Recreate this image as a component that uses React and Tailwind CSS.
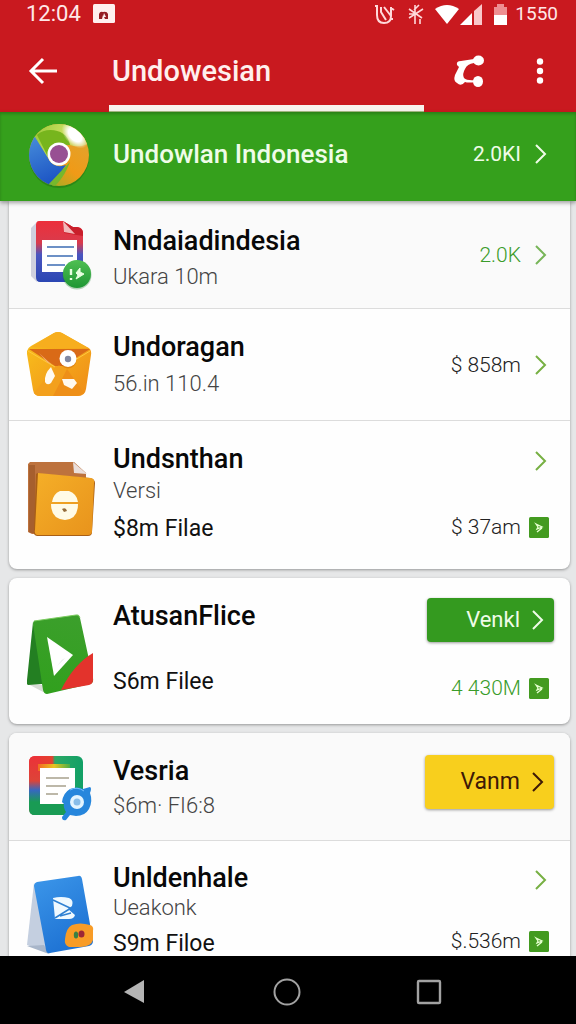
import React from "react";

function ChromeBall() {
  return (
    <svg viewBox="0 0 66 70" className="h-[70px] w-[66px] shrink-0" aria-hidden="true">
      <defs>
        <linearGradient id="ballBlue" x1="0" y1="0" x2="0.3" y2="1">
          <stop offset="0" stopColor="#4b93dd" />
          <stop offset="1" stopColor="#1d55c4" />
        </linearGradient>
        <linearGradient id="ballOrange" x1="1" y1="0" x2="0.2" y2="1">
          <stop offset="0" stopColor="#d9a83a" />
          <stop offset="0.6" stopColor="#f09a17" />
          <stop offset="1" stopColor="#84b52a" />
        </linearGradient>
        <linearGradient id="ballTop" x1="0" y1="0" x2="1" y2="0.2">
          <stop offset="0" stopColor="#8cc52f" />
          <stop offset="0.55" stopColor="#c5dc5c" />
          <stop offset="1" stopColor="#d6c65a" />
        </linearGradient>
        <radialGradient id="ballShine" cx="0.5" cy="0.5" r="0.5">
          <stop offset="0.5" stopColor="#fff" />
          <stop offset="1" stopColor="#fff" stopOpacity="0" />
        </radialGradient>
        <clipPath id="ballClip"><ellipse cx="31" cy="34" rx="30" ry="31" /></clipPath>
      </defs>
      <ellipse cx="31" cy="36" rx="30" ry="31" fill="#1d6b12" opacity="0.45" />
      <g clipPath="url(#ballClip)">
        <rect width="66" height="70" fill="url(#ballOrange)" />
        <path d="M0 0H66V20Q52 28 42 24H30L19 37L5 16Z" fill="url(#ballTop)" />
        <path d="M9 14C18 5 40 8 42 24H31C24 25 20 30 20 36Z" fill="#77b51d" />
        <ellipse cx="47" cy="14" rx="16" ry="10" transform="rotate(46 47 14)" fill="url(#ballShine)" />
        <path d="M0 10L7 16L20 37C23 44 30 47 38 44L22 66H0Z" fill="url(#ballBlue)" />
        <path d="M20 64L37 46L42 41C37 54 31 61 26 66Z" fill="#76b82c" />
      </g>
      <circle cx="31" cy="33" r="11.5" fill="#fff" />
      <circle cx="31" cy="33" r="9" fill="#985093" />
    </svg>
  );
}

function DocumentIcon() {
  return (
    <svg viewBox="0 0 66 72" className="h-[72px] w-[66px] shrink-0" aria-hidden="true">
      <defs>
        <linearGradient id="docBody" x1="0" y1="0" x2="0" y2="1">
          <stop offset="0" stopColor="#ec2f3b" />
          <stop offset="0.36" stopColor="#d93b4c" />
          <stop offset="0.55" stopColor="#4a55c0" />
          <stop offset="1" stopColor="#2b46b3" />
        </linearGradient>
        <linearGradient id="docBadge" x1="0" y1="0" x2="0" y2="1">
          <stop offset="0" stopColor="#4fbf52" />
          <stop offset="1" stopColor="#1f9634" />
        </linearGradient>
      </defs>
      <path d="M8 4L3 9V57L9 63Z" fill="#cfd0de" />
      <path d="M11 2H35L45 8H50Q55 9 55 14V58Q55 63 50 63H12Q8 63 8 58V6Q8 2 11 2Z" fill="url(#docBody)" />
      <path d="M35 2L36 14L55 17V13Q54 9 49 8H45Z" fill="#c91f2b" />
      <path d="M35 2L47 15L36 13Z" fill="#f2b9ba" />
      <path d="M14 21H49V53H14Z" fill="#fff" />
      <path d="M19 28H46M19 37H45M19 46H37" stroke="#3d6cb4" strokeWidth="1.6" />
      <circle cx="49" cy="56" r="14.500" fill="#137626" opacity="0.3" />
      <circle cx="49" cy="55" r="14" fill="url(#docBadge)" />
      <path d="M43 50V56M43 59V61" stroke="#e8ffe0" strokeWidth="2.400" />
      <path d="M52 49L48 54L50 56L48 60L56 55L52 53Z" fill="#e8ffe0" stroke="#e8ffe0" strokeWidth="1" />
    </svg>
  );
}

function EnvelopeIcon() {
  return (
    <svg viewBox="0 0 66 66" className="h-[66px] w-[66px] shrink-0" aria-hidden="true">
      <defs>
        <linearGradient id="envBody" x1="0" y1="0" x2="1" y2="1">
          <stop offset="0" stopColor="#f9c31c" />
          <stop offset="1" stopColor="#ef8b18" />
        </linearGradient>
      </defs>
      <path d="M4 15L27 2Q31 0 35 2L60 16Q65 18 64 24L59 58Q58 65 51 65H13Q7 65 6 59L0 23Q-1 18 4 15Z" fill="url(#envBody)" />
      <path d="M2 18H63L36 35H28Z" fill="#d96a17" />
      <path d="M4 16L27 2Q31 0 35 2L61 17Q33 18 4 16Z" fill="#f7ae1e" />
      <path d="M7 62L26 38Q32 31 38 38L57 62Q54 65 50 65H13Q9 65 7 62Z" fill="#f3a01c" />
      <path d="M40 38L57 62Q54 65 50 65H26Z" fill="#ee8f18" />
      <path d="M1 20L28 36M63 20L38 35" stroke="#ffc93f" strokeWidth="1" />
      <path d="M12 22L25 34L20 31Z" fill="#f3b27a" />
      <circle cx="41" cy="29" r="8.500" fill="#c65e0d" opacity="0.4" />
      <circle cx="41" cy="27.500" r="8.500" fill="#fff" />
      <circle cx="41" cy="28" r="3.200" fill="#8188a2" />
      <path d="M24 36L28 45L24 52Q20 55 18 51Q17 43 24 36Z" fill="#fffaf0" />
      <path d="M35 48H47L50 52L45 58L37 54Z" fill="#fffaf0" />
    </svg>
  );
}

function FolderIcon() {
  return (
    <svg viewBox="0 0 68 76" className="h-[76px] w-[68px] shrink-0" aria-hidden="true">
      <defs>
        <linearGradient id="folderFront" x1="0" y1="0" x2="1" y2="1">
          <stop offset="0" stopColor="#f5af28" />
          <stop offset="1" stopColor="#e8931c" />
        </linearGradient>
      </defs>
      <path d="M3 1H47L59 12V73H5L1 71V3Z" fill="#bd723d" />
      <path d="M2 4H8V72H4L2 71Z" fill="#a65f2e" />
      <path d="M46 1L60 13L47 12Z" fill="#eadfdb" />
      <path d="M9 13Q11 11 15 13L63 17Q68 18 68 22L65 71Q65 75 61 75H10Q6 74 7 70Z" fill="#a95f16" />
      <path d="M11 12L64 17Q68 18 67 22L65 70Q65 74 61 74H10Q7 73 8 69Z" fill="url(#folderFront)" />
      <path d="M25 41Q26 33 33 30H42Q50 33 51 41Z" fill="#fffbe6" />
      <path d="M24 43H51Q51 58 38 59Q24 58 24 43Z" fill="#fffbe6" />
      <path d="M35 48Q39 46 40 50L37 51Z" fill="#946c3a" />
    </svg>
  );
}

function PlayFileIcon() {
  return (
    <svg viewBox="0 0 68 82" className="h-[82px] w-[68px] shrink-0" aria-hidden="true">
      <defs>
        <linearGradient id="playFront" x1="0.4" y1="0" x2="0.2" y2="1">
          <stop offset="0" stopColor="#3b9f2b" />
          <stop offset="1" stopColor="#31a01d" />
        </linearGradient>
      </defs>
      <path d="M1 70L18 79L28 72Z" fill="#d8dbd6" />
      <path d="M6 8L20 75L15 70L1 71Q-1 70 0 66Z" fill="#237f22" />
      <path d="M7 7L49 1Q52 0 53 4L66 64Q67 69 63 70L20 80Q17 80 16 76L6 10Q6 8 7 7Z" fill="url(#playFront)" />
      <path d="M7 7L49 1Q52 0 53 4" fill="none" stroke="#7ccc60" strokeWidth="1" />
      <path d="M34 76Q47 50 66 39V66Q66 70 62 71Z" fill="#e3332c" />
      <path d="M20 23L46 41L27 62Z" fill="#fff" />
      <path d="M38 44L30 52L35 46Z" fill="#dce3e0" />
    </svg>
  );
}

function NotesIcon() {
  return (
    <svg viewBox="0 0 66 68" className="h-[68px] w-[66px] shrink-0" aria-hidden="true">
      <defs>
        <linearGradient id="notesFrame" x1="0" y1="0" x2="1" y2="0">
          <stop offset="0" stopColor="#ec3138" />
          <stop offset="0.430" stopColor="#e4402f" />
          <stop offset="0.480" stopColor="#2ca865" />
          <stop offset="1" stopColor="#11a066" />
        </linearGradient>
        <linearGradient id="notesLeft" x1="0" y1="0" x2="0" y2="1">
          <stop offset="0" stopColor="#ec3138" />
          <stop offset="0.420" stopColor="#dd4438" />
          <stop offset="0.580" stopColor="#3668c0" />
          <stop offset="0.780" stopColor="#199b54" />
          <stop offset="1" stopColor="#199b54" />
        </linearGradient>
        <linearGradient id="notesTop" x1="0" y1="0" x2="1" y2="0">
          <stop offset="0" stopColor="#f36a22" />
          <stop offset="0.500" stopColor="#e8c41f" />
          <stop offset="1" stopColor="#49ae47" />
        </linearGradient>
      </defs>
      <rect x="1" y="1" width="54" height="59" rx="6" fill="url(#notesFrame)" />
      <path d="M7 1H12V60H7Q1 60 1 54V7Q1 1 7 1Z" fill="url(#notesLeft)" />
      <path d="M12 48H55V54Q55 60 49 60H7Q3 60 2 57Z" fill="#199b54" />
      <path d="M10 9H42V16H10Z" fill="url(#notesTop)" />
      <path d="M12 13H47V49H12Z" fill="#fff" />
      <path d="M18 23H41M18 31H38M18 39H30" stroke="#bdb8a9" strokeWidth="1.800" />
      <path d="M42 34Q49 31 55 34L62 32Q64 33 62 38Q65 46 61 54Q57 61 48 61L42 60L38 65Q34 66 34 62L38 57Q35 52 36 49L34 47Q35 38 42 34Z" fill="#2686dc" />
      <path d="M42 35Q49 31 56 36" stroke="#77bfff" strokeWidth="1" fill="none" />
      <circle cx="49" cy="47" r="7" fill="#e2f4ff" />
      <circle cx="49" cy="47" r="3.500" fill="#87bde9" />
    </svg>
  );
}

function BlueFileIcon() {
  return (
    <svg viewBox="0 0 68 80" className="h-[80px] w-[68px] shrink-0" aria-hidden="true">
      <defs>
        <linearGradient id="blueFront" x1="0" y1="0" x2="0.500" y2="1">
          <stop offset="0" stopColor="#3c97ea" />
          <stop offset="1" stopColor="#1e72d3" />
        </linearGradient>
      </defs>
      <path d="M7 8L0 70L22 78Z" fill="#c4cfe0" />
      <path d="M0 71L22 79L17 70Z" fill="#a8b6ca" />
      <path d="M10 7L51 1Q54 0 55 4L66 66Q66 70 62 71L23 78Q20 79 19 75L7 11Q7 8 10 7Z" fill="url(#blueFront)" />
      <path d="M26 23Q34 21 42 23Q47 25 45 31L41 34L48 40Q47 44 42 44H28Z" fill="#eff9ff" />
      <path d="M26 25L43 33M28 43L44 33M33 41L44 38" fill="none" stroke="#2e80d2" strokeWidth="1.500" />
      <path d="M45 50Q53 47 63 50Q67 51 66 56V65Q64 72 53 72H42Q37 70 38 64Q39 53 45 50Z" fill="#f89c27" />
      <ellipse cx="49" cy="60" rx="2.200" ry="3.500" fill="#398044" />
      <ellipse cx="54.500" cy="59" rx="3" ry="3.600" fill="#9c2636" />
    </svg>
  );
}

function Chevron({ className = "" }) {
  return (
    <svg viewBox="0 0 12 20" className={`h-5 w-3 shrink-0 ${className}`} aria-hidden="true">
      <path d="M1 1L10 10L1 19" fill="none" stroke="currentColor" strokeWidth="2" />
    </svg>
  );
}

function PlayBadge() {
  return (
    <svg viewBox="0 0 21 21" className="h-[21px] w-[21px] shrink-0" aria-hidden="true">
      <rect width="20" height="21" rx="1.500" fill="#439b20" />
      <path d="M7 7L13 10L8 12L9 10ZM8 15L13 11" fill="none" stroke="#e6ffd0" strokeWidth="1.300" />
    </svg>
  );
}

function Row({ icon, title, children, aside, className = "" }) {
  return (
    <li className={`flex items-start pr-4 pl-[18px] ${className}`}>
      {icon}
      <div className="min-w-0 flex-1 pt-[2px]">
        <h2 className="text-[27px] leading-8 font-medium text-[#080808]">{title}</h2>
        {children}
      </div>
      {aside}
    </li>
  );
}

function IconSlot({ children, className = "" }) {
  return <div className={`w-[86px] shrink-0 ${className}`}>{children}</div>;
}

function Sub({ children, className = "" }) {
  return <p className={`text-[22px] leading-7 font-light text-[#444] ${className}`}>{children}</p>;
}

function FileLine({ children, className = "" }) {
  return <p className={`text-[23px] leading-7 text-[#111] ${className}`}>{children}</p>;
}

function Price({ children, className = "" }) {
  return (
    <div className={`flex items-center gap-2 pr-1 text-[21px] leading-7 font-light text-[#222] ${className}`}>
      {children}
    </div>
  );
}

function OpenRow({ label }) {
  return (
    <button type="button" aria-label={label} className="mr-1 flex h-10 items-center pr-[3px] text-[#77b043]">
      <Chevron />
    </button>
  );
}

function StatusBar() {
  return (
    <div className="flex h-7 items-center justify-between pr-[18px] pl-[26px] text-[#ffe8e8]">
      <div className="flex items-center gap-3">
        <span className="text-[22px] leading-7">12:04</span>
        <svg viewBox="0 0 22 20" className="h-5 w-[22px]" aria-hidden="true">
          <rect width="22" height="19" rx="1.500" fill="#fff0ef" />
          <path d="M6 15V10Q7 7 10 8Q14 7 15 10V15H12L10 11L9 15Z" fill="#951d24" />
          <path d="M11 9L13 13H10Z" fill="#fff0ef" />
        </svg>
      </div>
      <div className="flex items-center">
        <svg viewBox="0 0 144 24" className="mr-2 h-6 w-36" aria-hidden="true">
          <g fill="none" stroke="#ffd9da" strokeWidth="2">
            <path d="M12 4H15M14 4V13Q14 21 21 21Q28 21 28 14V5M18 5V10L23 18M21 5L28 14M28 6L31 8M27 17H30" />
            <path d="M52 3V22M46 7L59 16M46 16L60 7M46 12H51M56 3L51 8M57 22V17" strokeWidth="1.600" />
          </g>
          <path d="M72 7Q84 -1 96 7L84 22Z" fill="#fff" />
          <path d="M97 23L109 11V23Z" fill="#fff" />
          <path d="M111 23V9L119 2V23Z" fill="#f9c7c9" />
          <path d="M131 5H134V2H141V5H144V13H131Z" fill="#ee8e91" />
          <path d="M131 13H144V23H131Z" fill="#fff" />
        </svg>
        <span className="text-[19px] leading-7">1550</span>
      </div>
    </div>
  );
}

function Header() {
  return (
    <header className="shrink-0 bg-[#c9191f] text-white">
      <StatusBar />
      <div className="flex h-[77px] items-center pr-7 pl-7 pt-2">
        <button type="button" aria-label="Back" className="w-[84px] shrink-0">
          <svg viewBox="0 0 30 28" className="h-7 w-[30px]" aria-hidden="true">
            <path d="M29 14H3M15 2L3 14L15 26" fill="none" stroke="#fff" strokeWidth="3" />
          </svg>
        </button>
        <h1 className="flex-1 text-[29px] leading-9 font-medium text-[#fff0ee]">Undowesian</h1>
        <button type="button" aria-label="Share" className="mr-[47px] w-8">
          <svg viewBox="0 0 32 34" className="h-[34px] w-8" aria-hidden="true">
            <path d="M4 11Q3 7 8 7L21 5V9Q14 10 12 15Q9 20 11 24Q14 27 23 26V28Q15 29 12 28Q8 33 4 29Q0 27 2 21L6 13Z" fill="#fff" />
            <ellipse cx="25.500" cy="6.500" rx="5.500" ry="5" fill="#fff" />
            <ellipse cx="25" cy="27.500" rx="5" ry="5.500" fill="#fff" />
          </svg>
        </button>
        <button type="button" aria-label="More options" className="w-4">
          <svg viewBox="0 0 16 28" className="h-7 w-4" aria-hidden="true">
            <circle cx="8" cy="4.500" r="3.200" fill="#fff" />
            <circle cx="8" cy="14" r="3.200" fill="#fff" />
            <circle cx="8" cy="23.500" r="3.200" fill="#fff" />
          </svg>
        </button>
      </div>
      <div className="mr-[152px] ml-[109px] h-[7px] border-b border-[#a7bb83] bg-[#f8f3ee]" />
    </header>
  );
}

function Featured() {
  return (
    <a href="#featured" className="relative flex h-[89px] shrink-0 items-center bg-[#35a01c] pr-[29px] pb-[6px] pl-7 text-[#effce8] shadow-[0_2px_4px_rgba(0,0,0,0.35),inset_0_2px_3px_rgba(0,0,0,0.2)]">
      <IconSlot className="-mr-[1px] pt-1"><ChromeBall /></IconSlot>
      <span className="flex-1 text-[26px] leading-8 font-medium">Undowlan Indonesia</span>
      <span className="mr-[14px] text-[21px] leading-7">2.0KI</span>
      <Chevron />
    </a>
  );
}

const card = "overflow-hidden bg-[#fefefe] shadow-[0_1px_3px_rgba(0,0,0,0.35)]";

export default function App() {
  return (
    <div className="flex h-screen flex-col overflow-hidden bg-[#e6e7e8] font-['Roboto',sans-serif]">
      <Header />
      <Featured />
      <main className="flex min-h-0 flex-1 flex-col gap-[9px] overflow-y-auto pr-[6px] pl-[9px] [scrollbar-width:none]">
        <ul className={`shrink-0 rounded-b-lg ${card}`}>
          <Row
            className="border-b border-[#dcdcdc] bg-[#fafafa] pt-[22px] pb-[17px]"
            icon={<IconSlot className="-mt-1 pl-[1px]"><DocumentIcon /></IconSlot>}
            title="Nndaiadindesia"
            aside={
              <Price className="mt-[18px]">
                <span className="mr-[6px] text-[#3a9c2a]">2.0K</span>
                <Chevron className="mr-[3px] text-[#77b558]" />
              </Price>
            }
          >
            <Sub className="mt-[6px]">Ukara 10m</Sub>
          </Row>
          <Row
            className="border-b border-[#dcdcdc] pt-5 pb-[22px]"
            icon={<IconSlot className="pt-[2px]"><EnvelopeIcon /></IconSlot>}
            title="Undoragan"
            aside={
              <Price className="mt-[22px]">
                <span className="mr-[6px]">$ 858m</span>
                <Chevron className="mr-[3px] text-[#77b043]" />
              </Price>
            }
          >
            <Sub className="mt-[7px]">56.in 110.4</Sub>
          </Row>
          <Row
            className="pt-5 pb-[26px]"
            icon={<IconSlot className="pt-5"><FolderIcon /></IconSlot>}
            title="Undsnthan"
            aside={
              <div className="flex flex-col items-end gap-8">
                <OpenRow label="Open Undsnthan" />
                <Price><span>$ 37am</span><PlayBadge /></Price>
              </div>
            }
          >
            <Sub className="mt-[2px]">Versi</Sub>
            <FileLine className="mt-[10px]">$8m Filae</FileLine>
          </Row>
        </ul>

        <ul className={`shrink-0 rounded-lg ${card}`}>
          <Row
            className="pt-5 pb-[22px]"
            icon={<IconSlot className="pt-4 pr-2"><PlayFileIcon /></IconSlot>}
            title="AtusanFlice"
            aside={
              <div className="flex flex-col items-end gap-8">
                <button type="button" className="flex h-11 w-[127px] items-center justify-end gap-3 rounded-[4px] bg-[#349a1f] pr-[10px] text-[22px] leading-7 text-[#effce8] shadow-[0_1px_3px_rgba(0,0,0,0.4)]">
                  Venkl
                  <Chevron />
                </button>
                <Price><span className="text-[#3a9c2a]">4 430M</span><PlayBadge /></Price>
              </div>
            }
          >
            <FileLine className="mt-9">S6m Filee</FileLine>
          </Row>
        </ul>

        <ul className={`shrink-0 rounded-t-lg ${card}`}>
          <Row
            className="border-b border-[#dcdcdc] bg-[#fafafa] pt-5 pb-[17px]"
            icon={<IconSlot className="pt-[2px] pl-[1px]"><NotesIcon /></IconSlot>}
            title="Vesria"
            aside={
              <button type="button" className="mt-[2px] flex h-[54px] w-[129px] items-center justify-end gap-3 rounded-[4px] bg-[#f8cf1d] pr-[10px] text-[23px] leading-7 text-[#3d1907] shadow-[0_1px_3px_rgba(0,0,0,0.4)]">
                Vanm
                <Chevron />
              </button>
            }
          >
            <Sub className="mt-[5px]">$6m· FI6:8</Sub>
          </Row>
          <Row
            className="pt-[19px] pb-7"
            icon={<IconSlot className="pt-[15px]"><BlueFileIcon /></IconSlot>}
            title="Unldenhale"
            aside={
              <div className="flex flex-col items-end gap-[27px]">
                <OpenRow label="Open Unldenhale" />
                <Price><span>$.536m</span><PlayBadge /></Price>
              </div>
            }
          >
            <Sub>Ueakonk</Sub>
            <FileLine className="mt-2">S9m Filoe</FileLine>
          </Row>
        </ul>
      </main>

      <nav className="flex h-[68px] shrink-0 items-center justify-center gap-[114px] bg-black pr-3 pt-1" aria-label="System navigation">
        <button type="button" aria-label="Back" className="mr-[9px]">
          <svg viewBox="0 0 28 28" className="size-7" aria-hidden="true">
            <path d="M2 14L22 2V25Z" fill="#b4b4b4" />
          </svg>
        </button>
        <button type="button" aria-label="Home">
          <svg viewBox="0 0 28 28" className="size-7" aria-hidden="true">
            <circle cx="14" cy="14" r="12.500" fill="none" stroke="#a2a2a2" strokeWidth="2" />
          </svg>
        </button>
        <button type="button" aria-label="Recent apps">
          <svg viewBox="0 0 28 28" className="size-7" aria-hidden="true">
            <rect x="3" y="3" width="22" height="22" rx="1" fill="none" stroke="#a2a2a2" strokeWidth="2.400" />
          </svg>
        </button>
      </nav>
    </div>
  );
}
